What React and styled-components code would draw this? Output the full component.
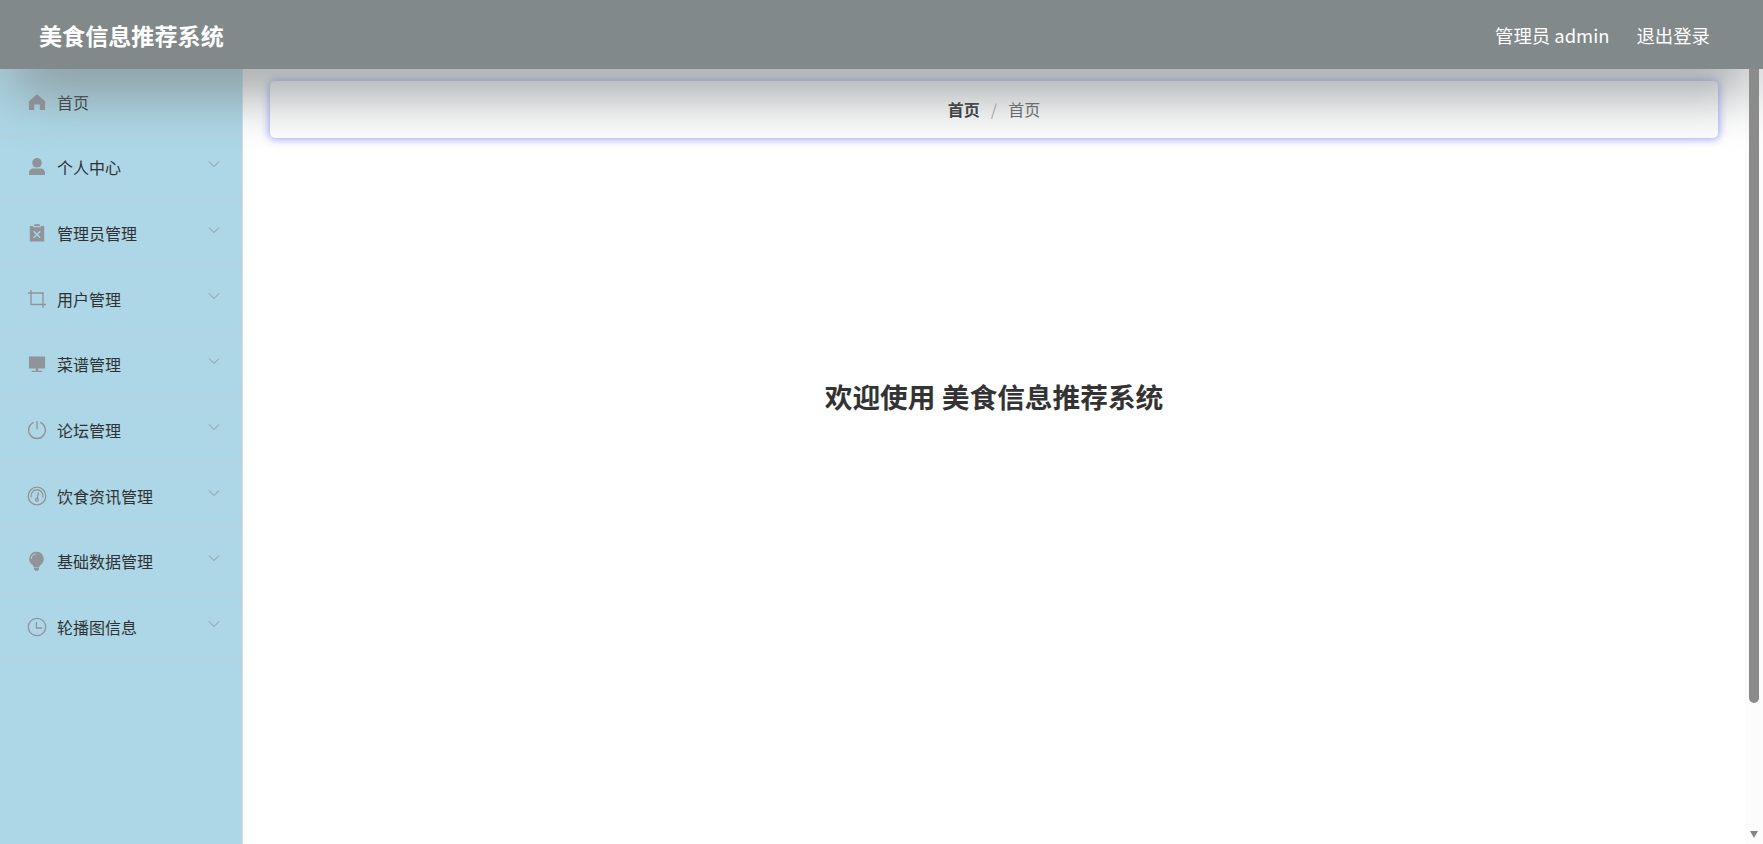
import styled, { createGlobalStyle } from "styled-components";

const GlobalStyle = createGlobalStyle`
* {
    box-sizing: border-box;
}
body {
    margin: 0;
    background-color: #fff;
    font-family: "Noto Sans CJK SC", sans-serif;
    overflow: hidden;
}
`

const Page = styled.div`
display: flex;
flex-direction: column;
width: 100%;
height: 100vh;
`

const Header = styled.header`
display: flex;
flex-shrink: 0;
justify-content: space-between;
align-items: center;
position: relative;
z-index: 2;
height: 69px;
padding: 0 53px 0 39px;
color: #fff;
background-color: #82898b;
box-shadow: 0 29px 58px -10px #82898b;
`

const Title = styled.h1`
margin: 0;
padding-top: 1px;
font-size: 23.1px;
line-height: 34px;
font-weight: 700;
`

const UserCont = styled.div`
display: flex;
gap: 27px;
padding-top: 1px;
font-size: 18.4px;
line-height: 28px;
`

const Body = styled.div`
display: flex;
flex: 1;
min-height: 0;
`

const Sidebar = styled.nav`
width: 243px;
flex-shrink: 0;
background-color: #add7e6;
border-right: 1px solid #d3dfe6;
`

const MenuItem = styled.div`
display: flex;
align-items: center;
height: 65.65px;
padding: 1px 22px 0 27px;
border-bottom: 1px solid #bccfdb;
color: #303133;
font-size: 16px;
`

const MenuIcon = styled.svg`
width: 20px;
height: 20px;
margin-right: 10px;
flex-shrink: 0;
fill: #909399;
`

const Label = styled.span`
flex: 1;
line-height: 24px;
`

const Arrow = styled.svg`
width: 12px;
height: 8px;
margin-bottom: 6px;
fill: none;
stroke: #909399;
stroke-width: 1;
`

const Main = styled.main`
display: flex;
flex-direction: column;
flex: 1;
padding: 12px 27px 0;
`

const Breadcrumb = styled.div`
display: flex;
justify-content: center;
align-items: center;
gap: 11px;
height: 57px;
flex-shrink: 0;
padding-bottom: 2px;
border-radius: 5px;
background-color: #fdfefd;
box-shadow: 0 0 9px 1px #98a2f6;
color: #606266;
font-size: 16px;
`

const Current = styled.span`
color: #303133;
font-weight: 700;
`

const Slash = styled.span`
color: #a8abb2;
`

const Welcome = styled.h2`
margin: 0;
padding-top: 237px;
text-align: center;
color: #333;
font-size: 27.7px;
line-height: 42px;
font-weight: 700;
`

const Scrollbar = styled.div`
display: flex;
flex-direction: column;
justify-content: space-between;
align-items: center;
width: 18px;
padding-bottom: 6px;
background-color: #fcfcfc;
`

const Thumb = styled.div`
position: relative;
z-index: 3;
width: 10px;
height: 634px;
border-radius: 0 0 5px 5px;
background-color: #8b8b8b;
`

const ScrollDown = styled.div`
border-left: 4.5px solid transparent;
border-right: 4.5px solid transparent;
border-top: 7px solid #858585;
`

const line = { fill: "none", stroke: "#909399", strokeWidth: 1.3 };

const icons = {
    home: <path d="M10 2.2 1.9 9.3V18h5.3v-5.6h5.6V18h5.3V9.3z" />,
    user: <><circle cx="10" cy="5.8" r="4.8" /><path d="M2 18v-2.2c0-2.6 1.7-4.2 4.2-4.2h7.6c2.5 0 4.2 1.6 4.2 4.2V18z" /></>,
    release: <><path d="M2.8 3h3.5v1.2h7.4V3h3.5v15.5H2.8z" /><path d="M7.2 1.2h5.6v2H7.2z" /><path d="m6.7 8.2 6.6 6.6m0-6.6-6.6 6.6" fill="none" stroke="#add7e6" strokeWidth="1.3" /></>,
    crop: <path d="M4 1v14.5h15M1 4h15v15" {...line} />,
    platform: <path d="M1.9 2.4h16.2v12H1.9zM8.8 14.4h2.4v2.3h4v1.2H4.8v-1.2h4z" />,
    power: <path d="M10 1v8.2M6.7 2.4a8.4 8.4 0 1 0 6.6 0" {...line} />,
    odometer: <><circle cx="10" cy="10" r="8.8" {...line} /><path d="M4.2 11.3A6 6 0 1 1 15.8 11.3" {...line} /><path d="m10.2 12.3 1.2-6" {...line} /><circle cx="9.9" cy="13.7" r="1.4" {...line} /></>,
    light: <><path d="M9.4.8a7.2 7.2 0 0 0-4.2 13c1 .8 1.4 1.7 1.6 2.3h5.4c.2-.6.7-1.5 1.6-2.3A7.2 7.2 0 0 0 9.4.8zM7 16.6h5v1.6l-1.2 1.6H8.2L7 18.2z" /><path d="M4.3 8a5.2 5.2 0 0 1 4.6-5" fill="none" stroke="#add7e6" strokeWidth="1" /></>,
    clock: <path d="M10 1.3a8.7 8.7 0 1 0 0 17.4 8.7 8.7 0 0 0 0-17.4zM9.4 5v6h5.8" {...line} />,
};

const menus = [
    { icon: "home", text: "首页", single: true },
    { icon: "user", text: "个人中心" },
    { icon: "release", text: "管理员管理" },
    { icon: "crop", text: "用户管理" },
    { icon: "platform", text: "菜谱管理" },
    { icon: "power", text: "论坛管理" },
    { icon: "odometer", text: "饮食资讯管理" },
    { icon: "light", text: "基础数据管理" },
    { icon: "clock", text: "轮播图信息" },
];

export default function App() {
    return (
    <Page>
        <GlobalStyle />
        <Header>
            <Title>美食信息推荐系统</Title>
            <UserCont>
                <span>管理员 admin</span>
                <span>退出登录</span>
            </UserCont>
        </Header>
        <Body>
            <Sidebar>
                {menus.map((menu) => (
                    <MenuItem key={menu.icon}>
                        <MenuIcon viewBox="0 0 20 20">{icons[menu.icon]}</MenuIcon>
                        <Label>{menu.text}</Label>
                        {!menu.single && <Arrow viewBox="0 0 12 8"><path d="m1 1.5 5 5 5-5" /></Arrow>}
                    </MenuItem>
                ))}
            </Sidebar>
            <Main>
                <Breadcrumb>
                    <Current>首页</Current>
                    <Slash>/</Slash>
                    <span>首页</span>
                </Breadcrumb>
                <Welcome>欢迎使用 美食信息推荐系统</Welcome>
            </Main>
            <Scrollbar>
                <Thumb />
                <ScrollDown />
            </Scrollbar>
        </Body>
    </Page>
    )
}
